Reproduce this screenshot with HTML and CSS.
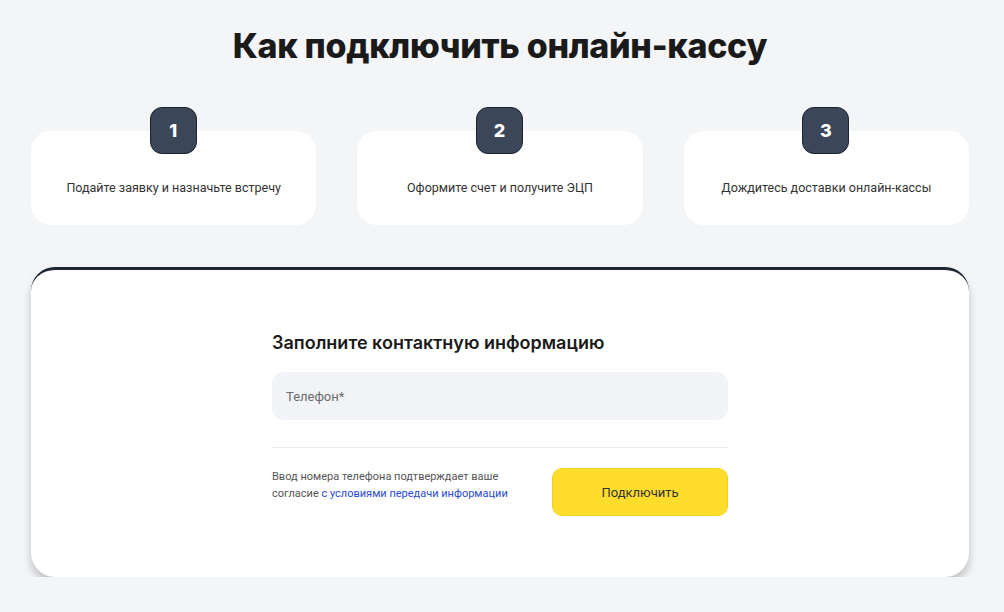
FILE: index.html
```html
<!DOCTYPE html>
<html lang="ru">
<head>
    <meta charset="UTF-8">
    <meta name="viewport" content="width=device-width, initial-scale=1.0">
    <title>Как подключить онлайн-кассу</title>
    <link rel="stylesheet" href="styles.css">
</head>
<body>
    <div class="page">
        <h1 class="title">Как подключить онлайн-кассу</h1>

        <div class="steps">
            <div class="step">
                <div class="step-num">1</div>
                <p>Подайте заявку и назначьте встречу</p>
            </div>
            <div class="step">
                <div class="step-num">2</div>
                <p>Оформите счет и получите ЭЦП</p>
            </div>
            <div class="step">
                <div class="step-num">3</div>
                <p>Дождитесь доставки онлайн-кассы</p>
            </div>
        </div>

        <div class="form-card">
            <form class="form">
                <h2>Заполните контактную информацию</h2>
                <input type="tel" class="phone" placeholder="Телефон*">
                <div class="divider"></div>
                <div class="form-bottom">
                    <p class="consent">Ввод номера телефона подтверждает ваше<br>согласие <a href="#">с&nbsp;условиями передачи информации</a></p>
                    <button type="button" class="submit">Подключить</button>
                </div>
            </form>
        </div>
    </div>
</body>
</html>
```

FILE: styles.css
```css
body {
    margin: 0;
    background-color: #f4f5f7;
    font-family: Roboto, "Liberation Sans", sans-serif;
    color: #333333;
}

.page {
    width: 938px;
    margin-left: 31px;
    padding-top: 23px;
}

.title {
    margin: 0;
    text-align: center;
    font-family: Inter, "Liberation Sans", sans-serif;
    font-weight: 800;
    font-size: 34px;
    line-height: 46px;
    letter-spacing: -0.3px;
    color: #1a1a1a;
}

.steps {
    display: grid;
    grid-template-columns: repeat(3, 1fr);
    column-gap: 41px;
    margin-top: 38px;
}

.step {
    position: relative;
    background-color: white;
    border-radius: 20px;
    height: 94px;
    margin-top: 24px;
    display: flex;
    align-items: center;
    justify-content: center;
}

.step p {
    margin: 18px 0 0;
    font-size: 12.5px;
    color: #333333;
}

.step-num {
    position: absolute;
    top: -24px;
    left: 50%;
    margin-left: -24px;
    width: 47px;
    height: 47px;
    box-sizing: border-box;
    border: 1px solid #1b2230;
    border-radius: 12px;
    background-color: #3b4658;
    color: white;
    font-family: Inter, "Liberation Sans", sans-serif;
    font-weight: 800;
    font-size: 18px;
    display: flex;
    align-items: center;
    justify-content: center;
}

.form-card {
    margin-top: 42px;
    background-color: white;
    border-top: 3px solid #1d2535;
    border-radius: 24px;
    box-shadow: 0 6px 8px rgba(0, 0, 0, 0.22);
    height: 307px;
    display: flex;
    justify-content: center;
}

.form {
    width: 456px;
    padding-top: 61px;
}

.form h2 {
    margin: 0;
    font-family: Inter, "Liberation Sans", sans-serif;
    font-weight: 600;
    font-size: 18px;
    line-height: 24px;
    color: #1a1a1a;
}

.phone {
    display: block;
    width: 100%;
    box-sizing: border-box;
    height: 48px;
    margin-top: 17px;
    padding: 0 14px;
    border: none;
    border-radius: 12px;
    background-color: #f2f3f6;
    font-family: Roboto, "Liberation Sans", sans-serif;
    font-size: 13px;
}

.phone::placeholder {
    color: #6b6b6b;
}

.divider {
    height: 1px;
    background-color: #e8e9ec;
    margin-top: 27px;
}

.form-bottom {
    display: flex;
    justify-content: space-between;
    align-items: flex-start;
    margin-top: 20px;
}

.consent {
    margin: 0;
    width: 250px;
    font-size: 11px;
    line-height: 17px;
    color: #555555;
}

.consent a {
    color: #2a4bd8;
    text-decoration: none;
}

.submit {
    width: 176px;
    height: 48px;
    border: 1px solid #f5d21e;
    border-radius: 10px;
    background-color: #ffdd2d;
    font-family: Roboto, "Liberation Sans", sans-serif;
    font-size: 13px;
    color: #333333;
    cursor: pointer;
}
```
